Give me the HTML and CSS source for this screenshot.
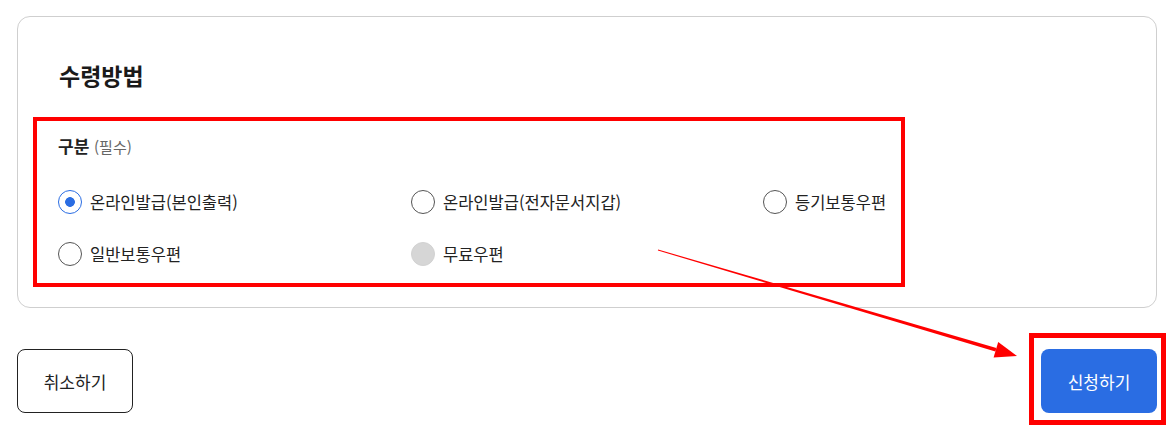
FILE: index.html
```html
<!DOCTYPE html>
<html lang="ko">
<head>
    <meta charset="UTF-8">
    <title>수령방법</title>
    <link rel="stylesheet" href="styles.css">
</head>
<body>
<div class="page">
    <div class="card">
        <h2 class="card-title">수령방법</h2>
        <div class="field mark-box">
            <div class="field-label">구분 <span class="req">(필수)</span></div>
            <div class="options">
                <label class="opt"><input type="radio" name="recv" checked><span>온라인발급(본인출력)</span></label>
                <label class="opt"><input type="radio" name="recv"><span>온라인발급(전자문서지갑)</span></label>
                <label class="opt"><input type="radio" name="recv"><span>등기보통우편</span></label>
                <label class="opt"><input type="radio" name="recv"><span>일반보통우편</span></label>
                <label class="opt"><input type="radio" name="recv" disabled><span>무료우편</span></label>
            </div>
        </div>
    </div>

    <div class="actions">
        <button class="btn btn-cancel" type="button">취소하기</button>
        <div class="submit-wrap">
            <button class="btn btn-submit" type="button">신청하기</button>
            <span class="mark-submit"></span>
        </div>
    </div>

    <!-- 안내 화살표 -->
    <svg class="arrow" width="1174" height="434" viewBox="0 0 1174 434">
        <polygon points="657.9,250.5 658.1,249.5 996.4,348.1 995.4,351.5" fill="#f00"/>
        <polygon points="1017,356 998.2,342.1 993.6,357.5" fill="#f00"/>
    </svg>
</div>
</body>
</html>
```

FILE: styles.css
```css
*{
    margin: 0;
    padding: 0;
    box-sizing: border-box;
}
body{
    background: #fff;
    font-family: "Noto Sans CJK KR", "Noto Sans", sans-serif;
    color: #222;
}
.page{
    position: relative;
    width: 1174px;
    height: 434px;
    padding: 16px 0 0 17px;
}
.card{
    width: 1140px;
    height: 292px;
    border: 1px solid #cfcfcf;
    border-radius: 13px;
    padding: 43px 0 0 15px;
}
.card-title{
    font-size: 23px;
    line-height: 30px;
    font-weight: 700;
    margin-left: 26px;
    color: #1a1a1a;
}
.mark-box{
    width: 872px;
    height: 170px;
    margin-top: 27px;
    border: 4px solid #f00;
    padding: 13px 0 0 21px;
}
.field-label{
    font-size: 17px;
    line-height: 24px;
    font-weight: 700;
}
.field-label .req{
    font-size: 15px;
    font-weight: 400;
    color: #666;
}
.options{
    display: grid;
    grid-template-columns: 353px 352px auto;
    row-gap: 28px;
    margin-top: 31px;
}
.opt{
    display: flex;
    align-items: center;
    gap: 8px;
    height: 24px;
    font-size: 16.5px;
    line-height: 24px;
    color: #222;
    white-space: nowrap;
}
.opt input{
    appearance: none;
    -webkit-appearance: none;
    width: 24px;
    height: 24px;
    border: 1px solid #555;
    border-radius: 50%;
    background: #fff;
    flex: none;
}
.opt input:checked{
    border: 1.5px solid #2a6de3;
    background: radial-gradient(circle, #2a6de3 0 4.5px, #fff 5.2px);
}
.opt input:disabled{
    border-color: #d2d2d2;
    background: #d6d6d6;
}
.actions{
    display: flex;
    justify-content: space-between;
    align-items: center;
    width: 1140px;
    margin-top: 41px;
}
.btn{
    width: 116px;
    height: 64px;
    border-radius: 8px;
    font-family: inherit;
    font-size: 17px;
    cursor: pointer;
}
.btn-cancel{
    background: #fff;
    border: 1px solid #222;
    color: #222;
}
.btn-submit{
    display: block;
    background: #2a6de3;
    border: none;
    color: #fff;
}
.submit-wrap{
    position: relative;
}
.mark-submit{
    position: absolute;
    left: -12px;
    top: -16px;
    right: -9px;
    bottom: -12px;
    border: 5px solid #f00;
    pointer-events: none;
}
.arrow{
    position: absolute;
    left: 0;
    top: 0;
    pointer-events: none;
}
```
